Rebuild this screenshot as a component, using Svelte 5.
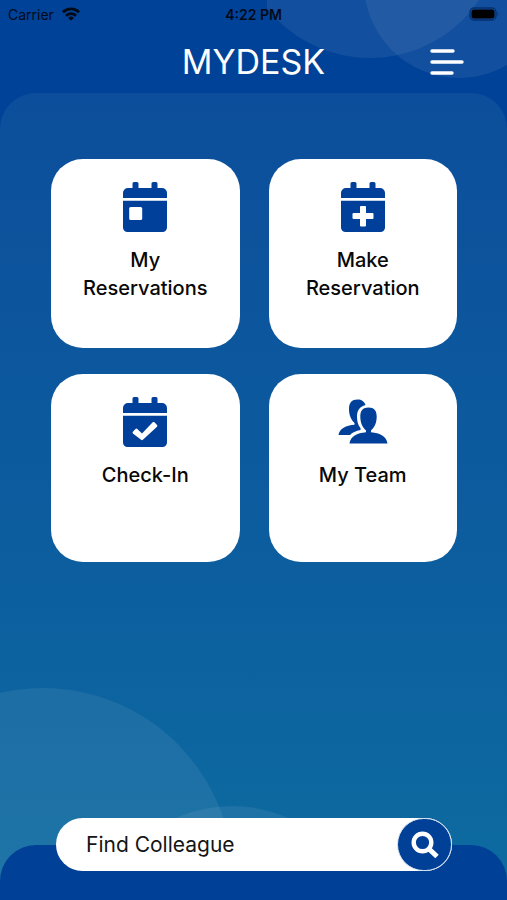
<script>
  const cards = [
    { label: 'My Reservations', icon: 'day' },
    { label: 'Make Reservation', icon: 'plus' },
    { label: 'Check-In', icon: 'check' },
    { label: 'My Team', icon: 'team' },
  ];
  let query = $state('');
</script>

<div class="screen">
  <svg class="bubbles top" viewBox="0 0 240 93" aria-hidden="true">
    <circle cx="103" cy="-74" r="132" />
    <circle cx="192" cy="-17" r="95" />
  </svg>

  <div class="status">
    <div class="carrier">
      <span>Carrier</span>
      <svg width="18" height="14" viewBox="0 0 18 14" aria-hidden="true">
        <g fill="none" stroke="#020a18" stroke-width="2.8">
          <path d="M1 5.2a11.4 11.4 0 0 1 16 0" />
          <path d="M4 8.7a7.2 7.2 0 0 1 10 0" />
        </g>
        <path d="M9 13.8 6.1 10.9a4.1 4.1 0 0 1 5.8 0z" fill="#020a18" />
      </svg>
    </div>
    <span class="time">4:22 PM</span>
    <svg class="battery" width="30" height="14" viewBox="0 0 30 14" aria-hidden="true">
      <rect x="1" y="1" width="26" height="12" rx="4" fill="none" stroke="#04306f" stroke-width="1.3" />
      <rect x="2.5" y="2.5" width="23" height="9" rx="2.5" fill="#000" />
      <path d="M28.5 5q1.6 2 0 4z" fill="#04306f" />
    </svg>
  </div>

  <header>
    <h1>MYDESK</h1>
    <button class="menu" aria-label="Menu">
      <svg width="36" height="28" viewBox="0 0 36 28">
        <path d="M3 3h21M3 14h30M3 25h20" stroke="#fff" stroke-width="3.4" stroke-linecap="round" />
      </svg>
    </button>
  </header>

  <main>
    <svg class="bubbles low" viewBox="0 0 400 200" aria-hidden="true">
      <circle cx="43" cy="198" r="190" />
      <circle cx="232" cy="264" r="138" />
    </svg>
    <nav>
      {#each cards as card}
        <button class="card">
          <svg width="50" height="50" viewBox="-3 0 50 50" fill="#00409a" aria-hidden="true">
            {#if card.icon === 'team'}
              <path d="M-2.500 38C-1.500 31.500 5 28.500 13.500 27.800V26C9.500 22.500 8 17 8 12C8 5.500 11 2.500 16.500 2.500C20.500 2.500 23.500 4.500 24.500 8C18.500 9.500 16 14 16 19.500C16 24.500 17 28 19.500 31V33C15 34 11 35.500 9 38z" />
              <path d="M8.500 46.500C9.500 39.500 16 36 25 35.300V33.500C21 30 19.300 25 19.300 19.500C19.300 13.500 22 10.500 27.500 10.500S35.700 13.500 35.700 19.500C35.700 25 34 30 30 33.500V35.300C39 36 45.500 39.500 46.500 46.500z" />
            {:else}
              <path d="M0 16V11a5 5 0 0 1 5-5H9.500V1.500a1.500 1.500 0 0 1 1.500-1.500H14a1.500 1.500 0 0 1 1.500 1.500V6H28.500V1.500A1.500 1.500 0 0 1 30 0h3a1.500 1.500 0 0 1 1.500 1.500V6H39a5 5 0 0 1 5 5v5z" />
              <path d="M0 18.700H44V45.500a4.500 4.500 0 0 1-4.500 4.500H4.500A4.500 4.500 0 0 1 0 45.500z" />
              {#if card.icon === 'day'}
                <rect x="6.200" y="25" width="13" height="13" rx="1.500" fill="#fff" />
              {:else if card.icon === 'plus'}
                <path d="M20 24h4a1 1 0 0 1 1 1v6h6.500a1 1 0 0 1 1 1v4a1 1 0 0 1-1 1H25v6.500a1 1 0 0 1-1 1h-4a1 1 0 0 1-1-1V37h-6.500a1 1 0 0 1-1-1v-4a1 1 0 0 1 1-1H19v-6a1 1 0 0 1 1-1z" fill="#fff" />
              {:else}
                <path d="M9.900 34.700l2.600-2.700q.9-.8 1.800 0l4.700 4.600L29.700 25.300q.9-.8 1.800 0l2.500 2.700q.8.900 0 1.700L19.900 42.800q-.9.800-1.800 0L9.900 36.400q-.8-.8 0-1.700z" fill="#fff" />
              {/if}
            {/if}
          </svg>
          <span>{card.label}</span>
        </button>
      {/each}
    </nav>
  </main>

  <footer>
    <form class="search" onsubmit={(e) => e.preventDefault()}>
      <input type="text" placeholder="Find Colleague" aria-label="Find Colleague" bind:value={query} />
      <button aria-label="Search">
        <svg width="28" height="28" viewBox="0 0 28 28" fill="none" stroke="#fff">
          <circle cx="11.500" cy="11.500" r="8.800" stroke-width="4.400" />
          <path d="M17.500 17.500l8.500 8" stroke-width="5" />
        </svg>
      </button>
    </form>
  </footer>
</div>

<style>
  .screen {
    position: relative;
    display: flex;
    flex-direction: column;
    min-height: 100vh;
    overflow: hidden;
    background: #004297;
    font-family: Inter, 'Liberation Sans', sans-serif;
  }

  button,
  input {
    border: 0;
    padding: 0;
    margin: 0;
    font: inherit;
  }

  button {
    cursor: pointer;
  }

  .bubbles {
    position: absolute;
    fill: #fff;
    fill-opacity: 0.07;
  }

  .top {
    top: 0;
    right: 0;
    width: 240px;
    height: 93px;
  }

  .low {
    left: 0;
    bottom: 0;
    width: 400px;
    height: 200px;
  }

  .status {
    position: relative;
    display: grid;
    grid-template-columns: 1fr auto 1fr;
    align-items: center;
    height: 28px;
    padding: 0 8px;
    font-size: 14px;
    color: #020a18;
  }

  .carrier {
    display: flex;
    align-items: center;
    gap: 8px;
  }

  .time {
    font-weight: 600;
  }

  .battery {
    justify-self: end;
  }

  header {
    position: relative;
    display: grid;
    grid-template-columns: 1fr auto 1fr;
    align-items: center;
    height: 63px;
    padding: 2px 42px 0;
  }

  h1 {
    grid-column: 2;
    margin: 0;
    font-size: 34px;
    font-weight: 400;
    line-height: 40px;
    color: #fff;
  }

  .menu {
    display: flex;
    justify-self: end;
    background: none;
  }

  main {
    position: relative;
    flex: 1;
    padding: 66px 50px 100px 51px;
    margin-bottom: -35px;
    border-radius: 36px 36px 0 0;
    background: linear-gradient(#0c4e9b, #0c5e9f 60%, #0d6ba0);
  }

  nav {
    position: relative;
    display: grid;
    grid-template-columns: 1fr 1fr;
    gap: 26px 29px;
  }

  .card {
    display: flex;
    flex-direction: column;
    align-items: center;
    gap: 14px;
    aspect-ratio: 1;
    padding: 23px 24px;
    border-radius: 32px;
    background: #fff;
    color: #080808;
    font-size: 20px;
    font-weight: 500;
    line-height: 28px;
  }

  .card svg {
    flex: none;
  }

  footer {
    position: relative;
    height: 55px;
    padding: 0 55px 0 56px;
    border-radius: 36px 36px 0 0;
    background: #004097;
  }

  .search {
    display: flex;
    height: 53px;
    margin-top: -27px;
    border-radius: 27px;
    background: #fff;
  }

  .search input {
    flex: 1;
    min-width: 0;
    padding-left: 30px;
    border-radius: 27px;
    outline: none;
    background: none;
    font-size: 21px;
    color: #151515;
  }

  .search input::placeholder {
    color: #151515;
    opacity: 1;
  }

  .search button {
    display: flex;
    align-items: center;
    justify-content: center;
    width: 55px;
    border: 1px solid #dce8f5;
    border-radius: 27px;
    background: #004097;
  }
</style>
